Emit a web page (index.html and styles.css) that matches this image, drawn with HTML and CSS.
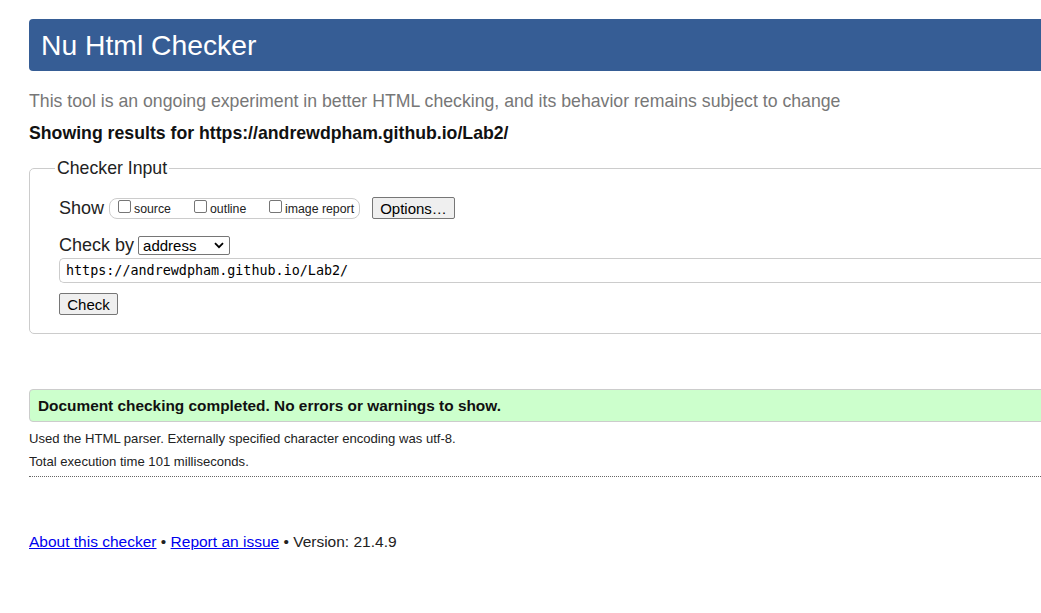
FILE: index.html
```html
<!DOCTYPE html>
<html lang="en">
<head>
<meta charset="utf-8">
<title>Nu Html Checker</title>
<link rel="stylesheet" href="styles.css">
</head>
<body>
<div class="page">
  <h1 class="title">Nu Html Checker</h1>
  <p class="intro">This tool is an ongoing experiment in better HTML checking, and its behavior remains subject to change</p>
  <p class="showing">Showing results for https://andrewdpham.github.io/Lab2/</p>
  <fieldset class="input">
    <legend class="legend">Checker Input</legend>
    <div class="row show-row">
      <span class="label">Show</span>
      <span class="group">
        <label class="opt opt-source"><span class="box"></span>source</label>
        <label class="opt opt-outline"><span class="box"></span>outline</label>
        <label class="opt"><span class="box"></span>image report</label>
      </span>
      <span class="btn btn-options">Options…</span>
    </div>
    <div class="row by-row">
      <span class="label">Check by</span>
      <span class="select">address<svg class="chev" width="10" height="7" viewBox="0 0 10 7"><path d="M1 1.2 L5 5.2 L9 1.2" fill="none" stroke="#000" stroke-width="1.8"/></svg></span>
    </div>
    <div class="url">https://andrewdpham.github.io/Lab2/</div>
    <span class="btn btn-check">Check</span>
  </fieldset>
  <div class="success">Document checking completed. No errors or warnings to show.</div>
  <p class="details">Used the HTML parser. Externally specified character encoding was utf-8.</p>
  <p class="details details-last">Total execution time 101 milliseconds.</p>
  <p class="footer"><a href="#">About this checker</a> • <a href="#">Report an issue</a> • Version: 21.4.9</p>
</div>
</body>
</html>
```

FILE: styles.css
```css
html, body {
  margin: 0;
  padding: 0;
  background: #fff;
  overflow: hidden;
}
body {
  font-family: "Liberation Sans", Arial, sans-serif;
  color: #000;
}
.page {
  width: 1080px;
  padding-left: 29px;
  padding-top: 19px;
}
.title {
  margin: 0;
  height: 52px;
  line-height: 52px;
  padding-left: 12px;
  background: #365d95;
  color: #fff;
  font-size: 28.3px;
  font-weight: normal;
  border-radius: 4px;
}
.intro {
  margin: 20px 0 0;
  font-size: 17.7px;
  line-height: 20px;
  color: #777;
}
.showing {
  margin: 12px 0 0;
  font-size: 17.7px;
  line-height: 20px;
  font-weight: bold;
  color: #111;
}
.input {
  margin: 15px 0 0;
  padding: 19px 0 18px 29px;
  border: 1px solid #ccc;
  border-radius: 5px;
}
.legend {
  padding: 0 2px;
  margin-left: -4px;
  font-size: 17.7px;
  line-height: 20px;
  color: #222;
}
.row {
  display: flex;
  align-items: center;
}
.label {
  font-size: 18px;
  color: #222;
}
.show-row {
  height: 22px;
}
.group {
  display: flex;
  align-items: center;
  white-space: nowrap;
  margin-left: 5px;
  height: 21px;
  padding: 0 0 0 8px;
  border: 1px solid #ccc;
  border-radius: 8px;
  width: 251px;
  box-sizing: border-box;
}
.opt {
  display: flex;
  align-items: center;
  font-size: 12.3px;
  color: #222;
  padding-top: 2px;
}
.opt-source { width: 76px; }
.opt-outline { width: 75px; }
.box {
  width: 13px;
  height: 13px;
  border: 1px solid #767676;
  border-radius: 2px;
  box-sizing: border-box;
  margin-right: 3px;
  margin-top: -5px;
}
.btn {
  display: inline-flex;
  align-items: center;
  justify-content: center;
  box-sizing: border-box;
  height: 22px;
  background: #efefef;
  border: 1px solid #767676;
  border-radius: 2px;
  font-size: 15px;
  color: #000;
}
.btn-options {
  margin-left: 12px;
  width: 83px;
}
.by-row {
  margin-top: 16px;
  height: 20px;
}
.select {
  margin-left: 4px;
  display: inline-flex;
  align-items: center;
  justify-content: space-between;
  box-sizing: border-box;
  width: 92px;
  height: 19px;
  padding: 0 5px 0 4px;
  border: 1px solid #767676;
  border-radius: 2px;
  font-size: 15px;
  color: #000;
}
.url {
  margin-top: 3px;
  height: 25px;
  box-sizing: border-box;
  border: 1px solid #ccc;
  border-right: none;
  border-radius: 5px 0 0 5px;
  padding-left: 6px;
  font-family: "DejaVu Sans Mono", "Liberation Mono", monospace;
  font-size: 13.4px;
  line-height: 23px;
  color: #000;
}
.btn-check {
  margin-top: 10px;
  width: 59px;
}
.success {
  margin-top: 55px;
  height: 33px;
  box-sizing: border-box;
  line-height: 31px;
  padding-left: 8px;
  background: #ccffcc;
  border: 1px solid #ccc;
  border-radius: 4px;
  font-size: 15.4px;
  font-weight: bold;
  color: #111;
}
.details {
  margin: 0;
  font-size: 13.1px;
  line-height: 23px;
  color: #222;
}
.success + .details { margin-top: 5px; }
.details-last {
  padding-bottom: 3px;
  border-bottom: 1px dotted #666;
}
.footer {
  margin: 55px 0 0;
  font-size: 15.5px;
  line-height: 20px;
  color: #222;
}
.footer a {
  color: #0000ee;
}
```
